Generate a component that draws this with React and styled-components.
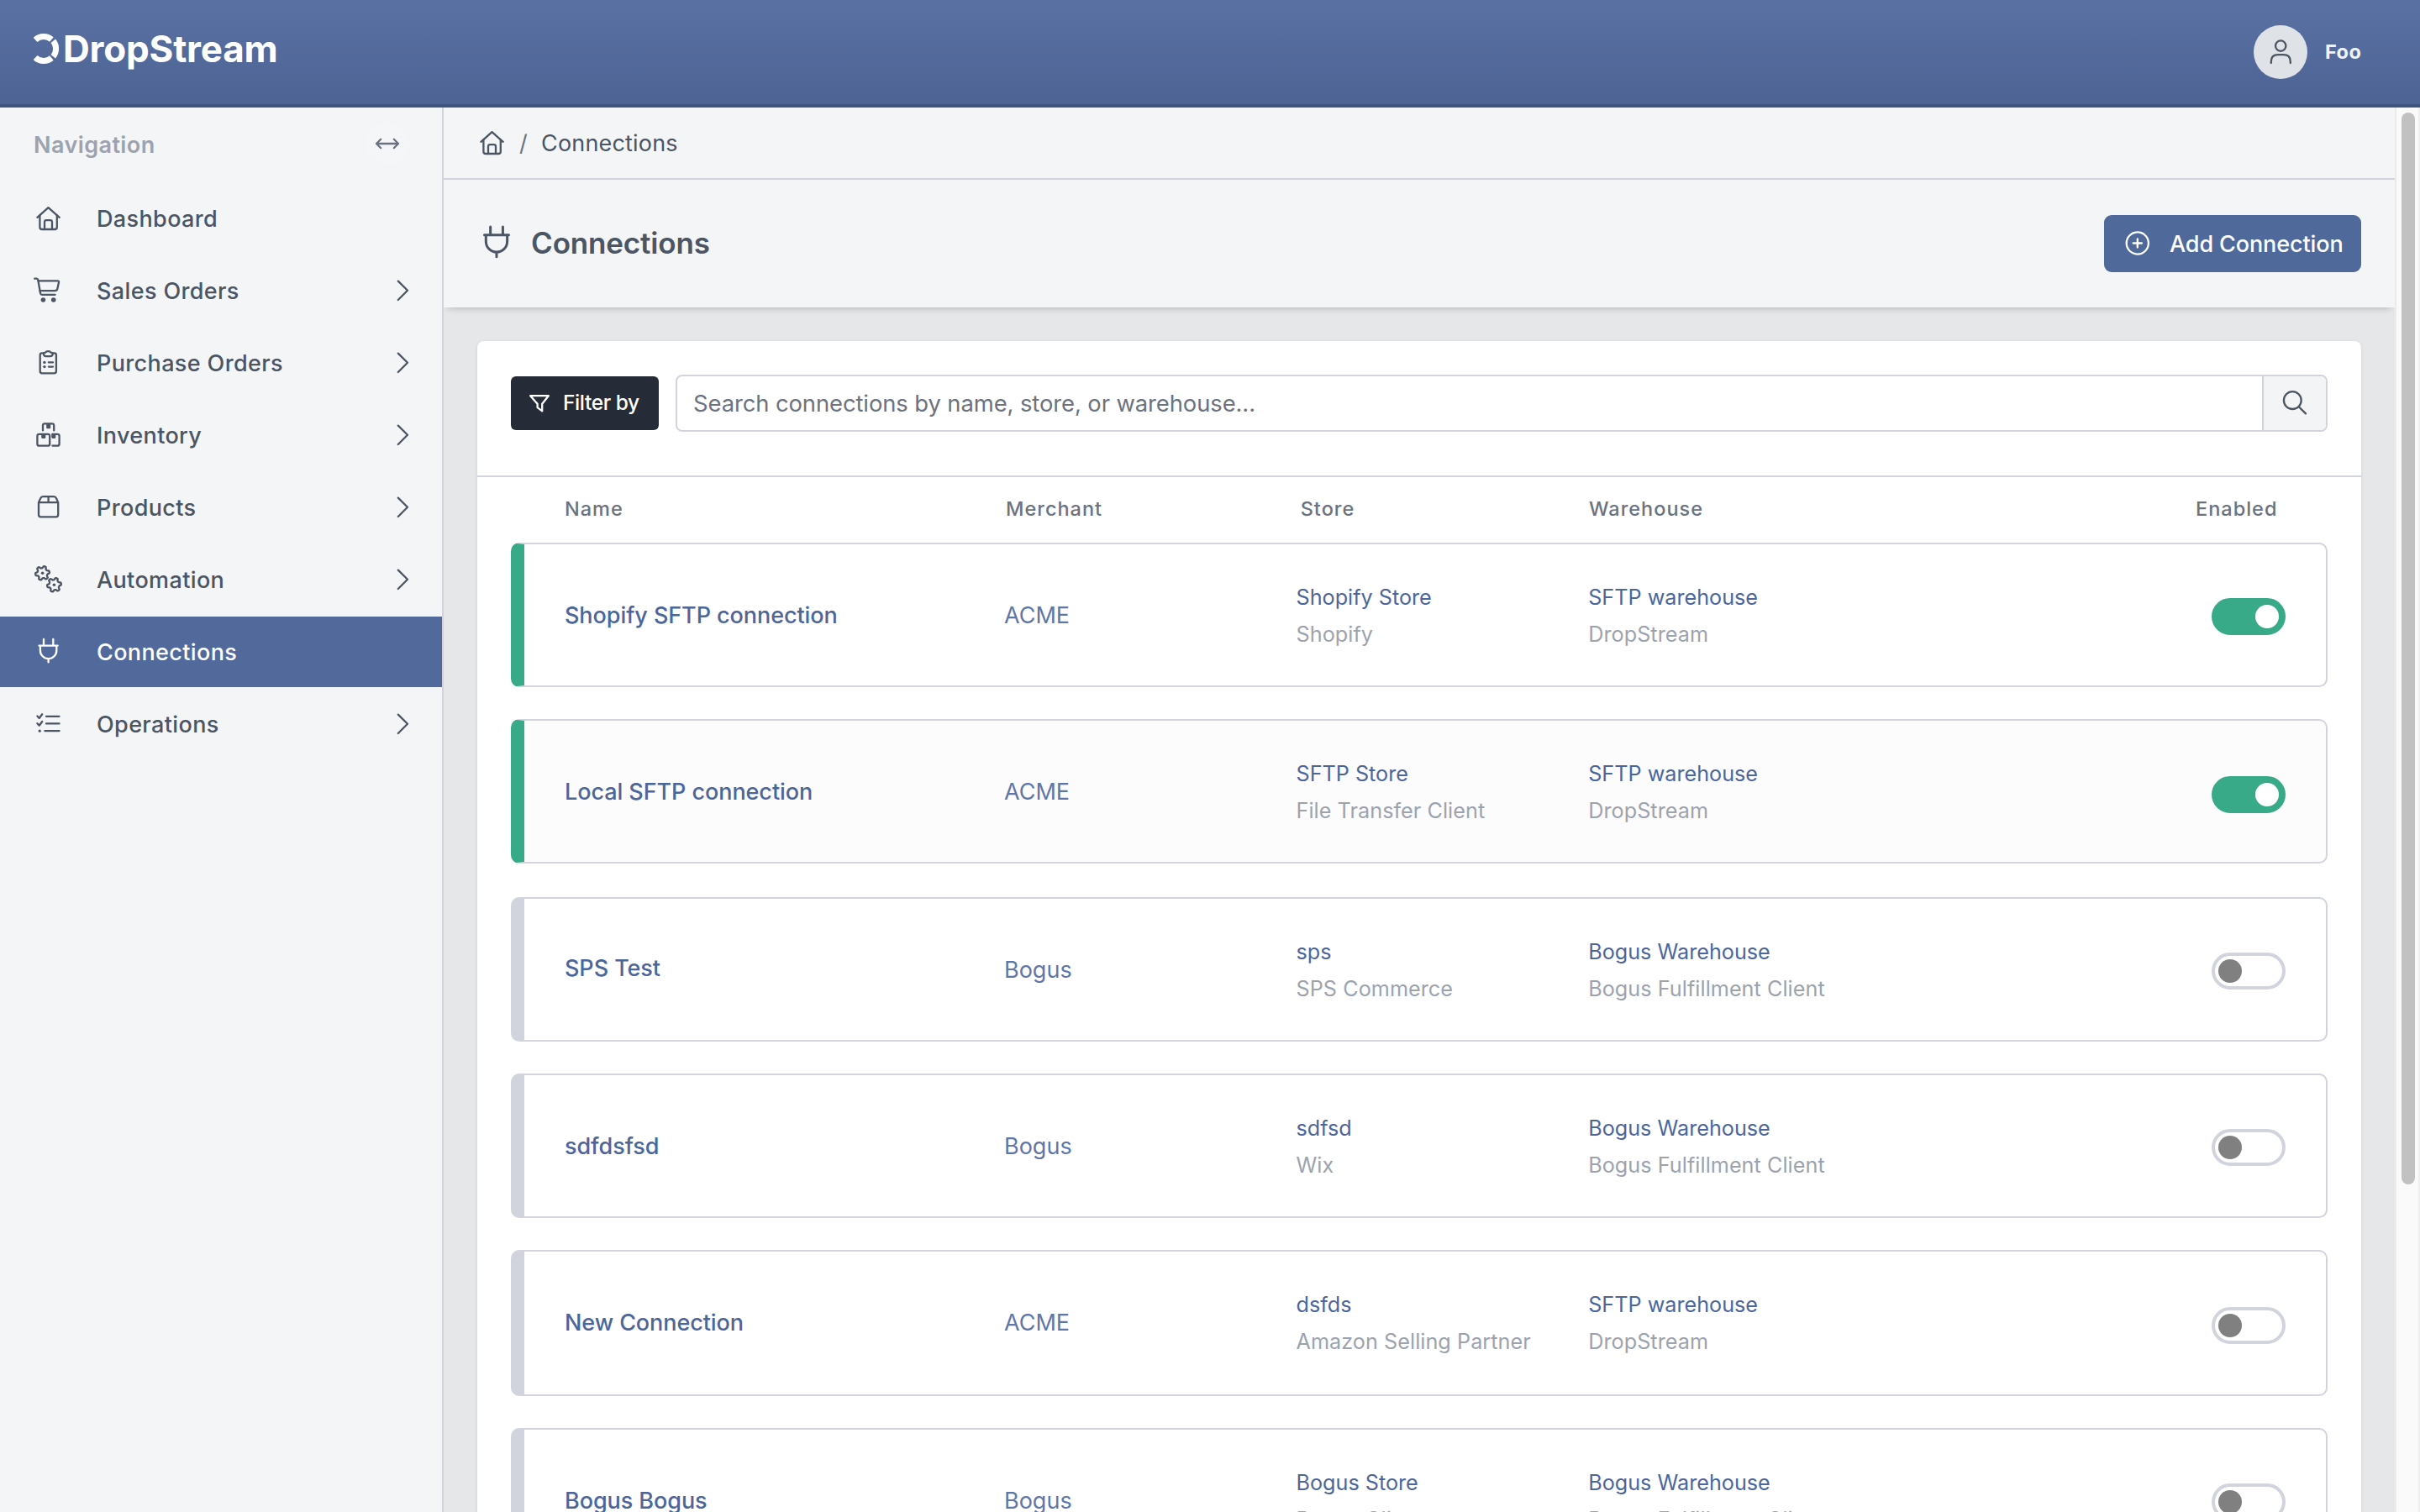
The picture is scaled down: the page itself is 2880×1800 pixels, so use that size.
import React from "react";
import styled, { createGlobalStyle } from "styled-components";

const GlobalStyle = createGlobalStyle`
    * {
        box-sizing: border-box;
    }

    body {
        margin: 0;
        overflow: hidden;
        font-family: Inter, "Liberation Sans", sans-serif;
        font-size: 27px;
        line-height: 33px;
        color: #4b5563;
        background: #e6e7e9;
    }
`

/* ---------- layout ---------- */

const Page = styled.div`
    display: flex;
    flex-direction: column;
    height: 1800px;
    overflow: hidden;
`

const TopBar = styled.header`
    display: flex;
    align-items: flex-start;
    justify-content: space-between;
    flex: none;
    height: 128px;
    padding: 30px 0 0 40px;
    background: linear-gradient(#5a72a3, #4c6394);
    border-bottom: 4px solid #3e5480;
`

const Columns = styled.div`
    display: flex;
    flex: 1;
    min-height: 0;
`

const Main = styled.main`
    flex: 1;
    min-width: 0;
    overflow: hidden;
`

/* ---------- top bar ---------- */

const Logo = styled.div`
    display: flex;
    gap: 4px;
    height: 55px;
    color: #fff;
`

const LogoMark = styled.svg`
    width: 31px;
    height: 36px;
    margin-top: 10px;
`

const LogoText = styled.span`
    padding-top: 1px;
    font-size: 44px;
    line-height: 54px;
    font-weight: 700;
    letter-spacing: -0.2px;
`

const UserMenu = styled.div`
    display: flex;
    align-items: center;
    gap: 20px;
    width: 198px;
    height: 64px;
`

const Avatar = styled.div`
    display: flex;
    align-items: center;
    justify-content: center;
    width: 64px;
    height: 64px;
    border-radius: 50%;
    background: #dfe2e7;
    color: #4b5563;
`

const UserName = styled.span`
    padding: 0 0 1px 1px;
    font-size: 23.5px;
    line-height: 29px;
    font-weight: 700;
    letter-spacing: 0.5px;
    color: #f1f2f4;
`

/* ---------- sidebar ---------- */

const Sidebar = styled.nav`
    flex: none;
    width: 528px;
    background: #f3f5f7;
    border-right: 2px solid #d1d4dc;
`

const SidebarHead = styled.div`
    display: flex;
    align-items: center;
    justify-content: space-between;
    height: 86px;
    margin-bottom: 4px;
    padding: 0 39px 0 40px;
`

const SidebarTitle = styled.span`
    padding-top: 3px;
    font-weight: 600;
    letter-spacing: 0.42px;
    color: #9ca3af;
`

const CollapseButton = styled.div`
    display: flex;
    align-items: center;
    justify-content: center;
    width: 52px;
    height: 50px;
    border-radius: 50%;
    background: #f5f6f8;
    color: #6b7280;
`

const NavItem = styled.a`
    display: flex;
    align-items: center;
    height: 84px;
    margin-bottom: 2px;
    padding: 0 39px 0 40px;
    color: ${props => props.$active ? "#fff" : "#4b5563"};
    background: ${props => props.$active ? "#52699b" : "transparent"};
`

const NavLabel = styled.span`
    flex: 1;
    padding: 1px 0 0 39px;
    font-weight: 500;
    letter-spacing: 0.37px;
`

/* ---------- page header ---------- */

const Breadcrumb = styled.div`
    display: flex;
    align-items: center;
    height: 86px;
    padding-left: 40px;
    background: #f3f5f7;
    border-bottom: 2px solid #d1d4dc;
`

const Crumb = styled.span`
    padding-top: 1px;
    letter-spacing: 0.18px;
`

const Slash = styled.span`
    width: 40px;
    padding: 1px 0 0 14px;
    color: #6b7280;
`

// the shadow is pulled in so that it shows only under the bar
const PageHeader = styled.div`
    position: relative;
    display: flex;
    align-items: center;
    justify-content: space-between;
    height: 152px;
    padding: 0 40px;
    background: #f3f5f7;
    box-shadow: 0 6px 8px -5px rgba(0, 0, 0, 0.22);
`

const Heading = styled.div`
    display: flex;
    align-items: center;
    gap: 17px;
    padding-bottom: 2px;
`

const Title = styled.h1`
    margin: 0;
    font-size: 35px;
    line-height: 42px;
    font-weight: 600;
    letter-spacing: -0.15px;
`

const AddButton = styled.div`
    display: flex;
    align-items: center;
    gap: 20px;
    width: 306px;
    height: 68px;
    padding-left: 22px;
    border-radius: 9px;
    font-weight: 500;
    letter-spacing: -0.11px;
    color: #fff;
    background: #4f699b;
`

const ButtonText = styled.span`
    padding-top: 1px;
    white-space: nowrap;
`

/* ---------- card ---------- */

const Card = styled.section`
    margin: 40px;
    background: #fff;
    border-radius: 8px;
    box-shadow: 0 1px 4px rgba(0, 0, 0, 0.1);
`

const Toolbar = styled.div`
    display: flex;
    align-items: center;
    gap: 20px;
    height: 162px;
    padding: 0 40px 12px;
    border-bottom: 2px solid #d1d4dc;
`

const FilterButton = styled.div`
    display: flex;
    align-items: center;
    gap: 14px;
    width: 176px;
    height: 64px;
    padding-left: 20px;
    border-radius: 6px;
    color: #fff;
    background: #252b37;
`

const FilterText = styled.span`
    padding-bottom: 2px;
    font-size: 24.5px;
    line-height: 30px;
    font-weight: 500;
    letter-spacing: -0.4px;
    white-space: nowrap;
`

const SearchBox = styled.div`
    display: flex;
    flex: 1;
    height: 68px;
    border: 2px solid #d1d4dc;
    border-radius: 8px;
    overflow: hidden;
`

const SearchInput = styled.div`
    flex: 1;
    padding: 15px 18px 15px 19px;
    font-size: 27.4px;
    line-height: 34px;
    letter-spacing: -0.09px;
    color: #6b7280;
`

const SearchButton = styled.div`
    display: flex;
    align-items: center;
    justify-content: center;
    width: 76px;
    border-left: 2px solid #d1d4dc;
    background: #f3f4f6;
`

/* ---------- table ---------- */

const TableHead = styled.div`
    display: grid;
    grid-template-columns: 525px 350.7px 343.3px 1fr 158px;
    height: 78px;
    padding: 23px 39px 0 104px;
    font-size: 23.5px;
    line-height: 29px;
    font-weight: 500;
    letter-spacing: 1px;
    color: #6b7280;
`

const Row = styled.div`
    display: grid;
    grid-template-columns: 523px 347.5px 347.7px 1fr 88px;
    align-items: start;
    height: ${props => props.$height || 172}px;
    margin: 0 40px ${props => props.$gap || 38}px;
    padding: 0 48px;
    border: 2px solid #d1d4dc;
    border-left: 16px solid ${props => props.$enabled ? "#38aa88" : "#d1d4dc"};
    border-radius: 10px;
    background: ${props => props.$hover ? "#fcfcfc" : "#fff"};
`

const NameLink = styled.a`
    margin-top: ${props => props.$raised ? 66 : 68}px;
    font-weight: 500;
    letter-spacing: -0.07px;
    color: #4c669b;
`

const MerchantLink = styled.a`
    margin-top: 68px;
    color: #5f77a8;
`

const Pair = styled.div`
    display: flex;
    flex-direction: column;
    margin-top: 41px;
    font-size: 25.2px;
    line-height: 44px;
`

const PairLink = styled.a`
    color: #4c669b;
`

const PairNote = styled.span`
    letter-spacing: 0.05px;
    color: #9ca3af;
`

const Toggle = styled.div`
    display: flex;
    align-items: center;
    justify-content: ${props => props.$on ? "flex-end" : "flex-start"};
    width: 88px;
    height: 44px;
    margin-top: ${props => props.$lowered ? 66 : 64}px;
    padding: 0 4px;
    border: 4px solid ${props => props.$on ? "#38aa88" : "#d1d4dc"};
    border-radius: 22px;
    background: ${props => props.$on ? "#38aa88" : "#fff"};
`

const Knob = styled.span`
    width: 28px;
    height: 28px;
    border-radius: 50%;
    background: ${props => props.$on ? "#fff" : "#808080"};
`

/* ---------- scrollbar ---------- */

const ScrollTrack = styled.div`
    flex: none;
    width: 30px;
    padding: 6px 0 0 6px;
    background: #fafafa;
    border-left: 2px solid #ebebeb;
    border-right: 2px solid #efefef;
`

const ScrollThumb = styled.div`
    width: 16px;
    height: 1276px;
    border-radius: 8px;
    background: #c1c1c1;
`

/* ---------- icons ---------- */

const Svg = styled.svg`
    flex: none;
    display: block;
    width: ${props => props.$w || 36}px;
    height: ${props => props.$h || props.$w || 36}px;
    fill: none;
    stroke: currentColor;
    stroke-width: 2.3;
    stroke-linecap: round;
    stroke-linejoin: round;

    .solid {
        fill: currentColor;
        stroke: none;
    }
`

const HouseIcon = () => (
    <Svg viewBox="0 0 36 36">
        <path d="M4.4 16.8 17.5 5.2 30.7 16.8" />
        <path d="M7.4 14.5V28.4Q7.4 31 10 31H25.2Q27.8 31 27.8 28.4V14.5" />
        <path d="M13 31V22.4Q13 20.2 15.2 20.2H19.8Q22 20.2 22 22.4V31" />
    </Svg>
)

const CartIcon = () => (
    <Svg viewBox="0 0 36 36">
        <path d="M1.2 3.7H3.4Q5 3.7 5.3 5.4L8.1 21.3Q8.4 22.8 9.9 22.8H25.6" />
        <path d="M5.6 6.3H28.6Q30.3 6.3 30 8L28.4 15.6Q27.9 18.2 25.3 18.2H7.6" />
        <circle className="solid" cx="11.4" cy="29" r="2.8" />
        <circle className="solid" cx="23.7" cy="29" r="2.8" />
    </Svg>
)

const ClipboardIcon = () => (
    <Svg viewBox="0 0 36 36">
        <path d="M11.5 6.3H10Q7.7 6.3 7.7 8.6V28Q7.7 30.3 10 30.3H24.6Q26.9 30.3 26.9 28V8.6Q26.9 6.3 24.6 6.3H23" />
        <path d="M14.2 5.6Q14.8 4.2 17.3 4.2T20.4 5.6Q22.9 5.6 22.7 7.4Q22.4 10.2 20 10.2H14.6Q12.2 10.2 11.9 7.4Q11.7 5.6 14.2 5.6Z" />
        <path d="M17.9 17.4H23M17.9 22.6H23" />
        <circle className="solid" cx="12.9" cy="17.4" r="1.7" />
        <circle className="solid" cx="12.9" cy="22.6" r="1.7" />
    </Svg>
)

const BoxesIcon = () => (
    <Svg viewBox="0 0 36 36">
        <path d="M11 12.4V6.6Q11 4.4 13.2 4.4H22Q24.2 4.4 24.2 6.6V12.4" />
        <path d="M6.6 16.8H17Q19.2 16.8 19.2 19V28.4Q19.2 30.6 17 30.6H6.6Q4.4 30.6 4.4 28.4V19Q4.4 16.8 6.6 16.8Z" />
        <path d="M22.4 16.8H28.4Q30.6 16.8 30.6 19V28.4Q30.6 30.6 28.4 30.6H22.4" />
        <path className="solid" d="M15.2 4.4H20.2V9.2Q20.2 10.3 19.1 10.3H16.3Q15.2 10.3 15.2 9.2ZM9.2 16.8H14.3V20.8Q14.3 21.9 13.2 21.9H10.3Q9.2 21.9 9.2 20.8ZM21.2 16.8H26.3V20.8Q26.3 21.9 25.2 21.9H22.3L21.2 20.6Z" />
    </Svg>
)

const BoxIcon = () => (
    <Svg viewBox="0 0 36 36">
        <path d="M6 12.1V26.8Q6 29.3 8.5 29.3H26.7Q29.2 29.3 29.2 26.8V12.1L26.9 7Q26.1 5.1 24 5.1H11.2Q9.1 5.1 8.3 7ZM6 12.1H29.2M17.6 5.1V12.1" />
    </Svg>
)

// outline of a gear with six soft teeth
function gearPath(cx, cy) {
    const points = []
    for (let a = 0; a < 360; a += 5) {
        const t = (a * Math.PI) / 180
        const r = 7.2 + 1.25 * Math.tanh(2.2 * Math.cos(6 * t + 1))
        points.push((cx + r * Math.cos(t)).toFixed(2) + " " + (cy + r * Math.sin(t)).toFixed(2))
    }
    return "M" + points.join("L") + "Z"
}

const GearsIcon = () => (
    <Svg viewBox="0 0 36 36">
        <path d={gearPath(10.5, 10.3)} />
        <path d={gearPath(24.5, 24.3)} />
        <circle className="solid" cx="10.6" cy="10.3" r="1.8" />
        <circle className="solid" cx="24.4" cy="24.3" r="1.8" />
    </Svg>
)

const PlugIcon = ({ size }) => (
    <Svg viewBox="0 0 36 36" $w={size}>
        <path d="M12 3V10M23.3 3V10M6.5 10.6H28.7M7.9 10.6V16.4A9.7 9.7 0 0 0 27.3 16.4V10.6M17.6 26.2V30.4" />
    </Svg>
)

const ListIcon = () => (
    <Svg viewBox="0 0 36 36">
        <path d="M15 8.8H30.5M15 17.4H30.5M13.4 26.2H30.5" />
        <path d="M4.4 8.5 6.7 11 10.2 6.3M4.4 17.2 6.7 19.7 10.2 15" />
        <circle className="solid" cx="7.2" cy="26.2" r="1.6" />
    </Svg>
)

const ChevronIcon = () => (
    <Svg viewBox="0 0 16 28" $w={16} $h={28}>
        <path d="M2.8 2.6 14 13.8 2.8 25" />
    </Svg>
)

const ArrowsIcon = () => (
    <Svg viewBox="0 0 30 16" $w={30} $h={16}>
        <path d="M2 8H28M7.2 2.7 2 8 7.2 13.3M22.8 2.7 28 8 22.8 13.3" />
    </Svg>
)

const UserIcon = () => (
    <Svg viewBox="0 0 36 36">
        <circle cx="18.2" cy="10.6" r="6.2" />
        <path d="M6.8 31V29.4Q6.8 21.2 15 21.2H21.6Q29.8 21.2 29.8 29.4V31" />
    </Svg>
)

const PlusCircleIcon = () => (
    <Svg viewBox="0 0 36 36">
        <circle cx="17.8" cy="17.5" r="13.1" />
        <path d="M17.8 12.4V22.6M12.7 17.5H22.9" />
    </Svg>
)

const FunnelIcon = () => (
    <Svg viewBox="0 0 28 28" $w={28}>
        <path d="M3.2 5.2H24.8L17.2 14.8V23.4L11.6 19.2V14.8Z" />
    </Svg>
)

const SearchIcon = () => (
    <Svg viewBox="0 0 36 36">
        <circle cx="15.3" cy="14.6" r="10.4" />
        <path d="M22.8 22.2 31 30.4" />
    </Svg>
)

/* ---------- data ---------- */

const navItems = [
    { label: "Dashboard", Icon: HouseIcon },
    { label: "Sales Orders", Icon: CartIcon, more: true },
    { label: "Purchase Orders", Icon: ClipboardIcon, more: true },
    { label: "Inventory", Icon: BoxesIcon, more: true },
    { label: "Products", Icon: BoxIcon, more: true },
    { label: "Automation", Icon: GearsIcon, more: true },
    { label: "Connections", Icon: PlugIcon, active: true },
    { label: "Operations", Icon: ListIcon, more: true },
]

const connections = [
    { name: "Shopify SFTP connection", merchant: "ACME", store: "Shopify Store", storeType: "Shopify", warehouse: "SFTP warehouse", client: "DropStream", enabled: true },
    { name: "Local SFTP connection", merchant: "ACME", store: "SFTP Store", storeType: "File Transfer Client", warehouse: "SFTP warehouse", client: "DropStream", enabled: true, hover: true, lowered: true, gap: 40 },
    { name: "SPS Test", merchant: "Bogus", store: "sps", storeType: "SPS Commerce", warehouse: "Bogus Warehouse", client: "Bogus Fulfillment Client", raised: true },
    { name: "sdfdsfsd", merchant: "Bogus", store: "sdfsd", storeType: "Wix", warehouse: "Bogus Warehouse", client: "Bogus Fulfillment Client" },
    { name: "New Connection", merchant: "ACME", store: "dsfds", storeType: "Amazon Selling Partner", warehouse: "SFTP warehouse", client: "DropStream", height: 174, lowered: true },
    { name: "Bogus Bogus", merchant: "Bogus", store: "Bogus Store", storeType: "Bogus Client", warehouse: "Bogus Warehouse", client: "Bogus Fulfillment Client" },
]

function Header() {
    return (
        <TopBar>
            <Logo>
                <LogoMark viewBox="0 0 31 36" fill="none" stroke="currentColor" strokeWidth="7">
                    <path d="M2.1 7.4A14.5 14.5 0 0 1 21.4 7" />
                    <path d="M23.3 8.8A14.5 14.5 0 0 1 23.3 27.2" />
                    <path d="M21.4 29A14.5 14.5 0 0 1 2.1 28.6" />
                </LogoMark>
                <LogoText>DropStream</LogoText>
            </Logo>
            <UserMenu>
                <Avatar><UserIcon /></Avatar>
                <UserName>Foo</UserName>
            </UserMenu>
        </TopBar>
    )
}

function Navigation() {
    return (
        <Sidebar>
            <SidebarHead>
                <SidebarTitle>Navigation</SidebarTitle>
                <CollapseButton><ArrowsIcon /></CollapseButton>
            </SidebarHead>
            {navItems.map(({ label, Icon, more, active }) => (
                <NavItem key={label} $active={active}>
                    <Icon />
                    <NavLabel>{label}</NavLabel>
                    {more && <ChevronIcon />}
                </NavItem>
            ))}
        </Sidebar>
    )
}

function ConnectionRow({ item }) {
    return (
        <Row $enabled={item.enabled} $hover={item.hover} $height={item.height} $gap={item.gap}>
            <NameLink $raised={item.raised}>{item.name}</NameLink>
            <MerchantLink>{item.merchant}</MerchantLink>
            <Pair>
                <PairLink>{item.store}</PairLink>
                <PairNote>{item.storeType}</PairNote>
            </Pair>
            <Pair>
                <PairLink>{item.warehouse}</PairLink>
                <PairNote>{item.client}</PairNote>
            </Pair>
            <Toggle $on={item.enabled} $lowered={item.lowered}>
                <Knob $on={item.enabled} />
            </Toggle>
        </Row>
    )
}

function App() {
    return (
        <Page>
            <GlobalStyle />
            <Header />
            <Columns>
                <Navigation />
                <Main>
                    <Breadcrumb>
                        <HouseIcon />
                        <Slash>/</Slash>
                        <Crumb>Connections</Crumb>
                    </Breadcrumb>
                    <PageHeader>
                        <Heading>
                            <PlugIcon size={47} />
                            <Title>Connections</Title>
                        </Heading>
                        <AddButton>
                            <PlusCircleIcon />
                            <ButtonText>Add Connection</ButtonText>
                        </AddButton>
                    </PageHeader>
                    <Card>
                        <Toolbar>
                            <FilterButton>
                                <FunnelIcon />
                                <FilterText>Filter by</FilterText>
                            </FilterButton>
                            <SearchBox>
                                <SearchInput>Search connections by name, store, or warehouse...</SearchInput>
                                <SearchButton><SearchIcon /></SearchButton>
                            </SearchBox>
                        </Toolbar>
                        <TableHead>
                            <span>Name</span>
                            <span>Merchant</span>
                            <span>Store</span>
                            <span>Warehouse</span>
                            <span>Enabled</span>
                        </TableHead>
                        {connections.map(item => <ConnectionRow key={item.name} item={item} />)}
                    </Card>
                </Main>
                <ScrollTrack>
                    <ScrollThumb />
                </ScrollTrack>
            </Columns>
        </Page>
    )
}

export default App
